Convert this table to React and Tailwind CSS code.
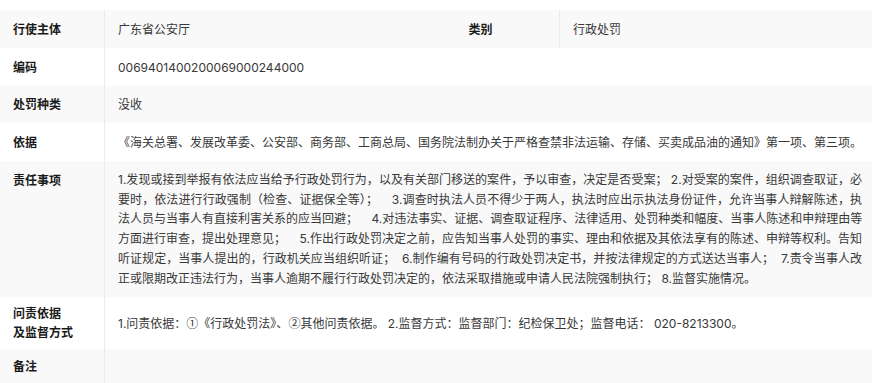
const FONT = 'font-["Inter","Noto_Sans_CJK_SC",sans-serif]'

const DUTY_LINES = [
  '1.发现或接到举报有依法应当给予行政处罚行为，以及有关部门移送的案件，予以审查，决定是否受案； 2.对受案的案件，组织调查取证，必',
  '要时，依法进行行政强制（检查、证据保全等）；    3.调查时执法人员不得少于两人，执法时应出示执法身份证件，允许当事人辩解陈述，执',
  '法人员与当事人有直接利害关系的应当回避；    4.对违法事实、证据、调查取证程序、法律适用、处罚种类和幅度、当事人陈述和申辩理由等',
  '方面进行审查，提出处理意见；    5.作出行政处罚决定之前，应告知当事人处罚的事实、理由和依据及其依法享有的陈述、申辩等权利。告知',
  '听证规定，当事人提出的，行政机关应当组织听证；  6.制作编有号码的行政处罚决定书，并按法律规定的方式送达当事人；  7.责令当事人改',
]
const DUTY_LAST = '正或限期改正违法行为，当事人逾期不履行行政处罚决定的，依法采取措施或申请人民法院强制执行； 8.监督实施情况。'

function Label({ children, className = '' }) {
  return (
    <div className={`w-[105px] shrink-0 border-r border-[#ebebeb] px-[13px] font-bold text-[#1a1a1a] ${className}`}>
      {children}
    </div>
  )
}

function Row({ label, gray, children, className = '', labelClass = 'flex items-center', valueClass = 'flex items-center' }) {
  return (
    <div className={`flex ${gray ? 'bg-[#f9f9f9]' : 'bg-white'} ${className}`}>
      <Label className={labelClass}>{label}</Label>
      <div className={`flex-1 min-w-0 pl-[13px] pr-[10px] text-[#383838] ${valueClass}`}>{children}</div>
    </div>
  )
}

const CJK = 'font-["Noto_Sans_CJK_SC",sans-serif]'

export default function App() {
  return (
    <div className={`w-[872px] h-[383px] overflow-hidden bg-white pt-[10px] text-[12px] leading-[19px] ${FONT}`}>
      <div className="flex h-[38px] bg-[#f9f9f9]">
        <Label className="flex items-center">行使主体</Label>
        <div className="w-[295px] flex items-center pl-[13px] text-[#383838]">广东省公安厅</div>
        <div className="w-[160px] border-r border-[#ebebeb] flex items-center justify-center pl-[2px] font-bold text-[#1a1a1a]">
          类别
        </div>
        <div className="flex-1 flex items-center pl-[13px] text-[#383838]">行政处罚</div>
      </div>

      <Row label="编码" className="h-[38px]">0069401400200069000244000</Row>
      <Row label="处罚种类" gray className="h-[37px]">没收</Row>
      <Row label="依据" className="h-[38px]">
        《海关总署、发展改革委、公安部、商务部、工商总局、国务院法制办关于严格查禁非法运输、存储、买卖成品油的通知》第一项、第三项。
      </Row>

      <Row label="责任事项" gray labelClass="pt-[10px]" valueClass="block py-[9px] leading-[19.7px]">
        {DUTY_LINES.map((line, i) => (
          <div key={i} className="whitespace-pre text-justify [text-align-last:justify]">
            {line}
          </div>
        ))}
        <div className="whitespace-pre">{DUTY_LAST}</div>
      </Row>

      <Row label={<span>问责依据<br />及监督方式</span>} labelClass="flex items-center py-[7px]">
        <span>
          1.问责依据：<span className={CJK}>①</span>《行政处罚法》、<span className={CJK}>②</span>其他问责依据。 2.监督方式：监督部门：纪检保卫处；监督电话： 020-8213300。
        </span>
      </Row>

      <Row label="备注" gray className="h-[40px]" labelClass="flex items-center h-[34px]">
        {''}
      </Row>
    </div>
  )
}
